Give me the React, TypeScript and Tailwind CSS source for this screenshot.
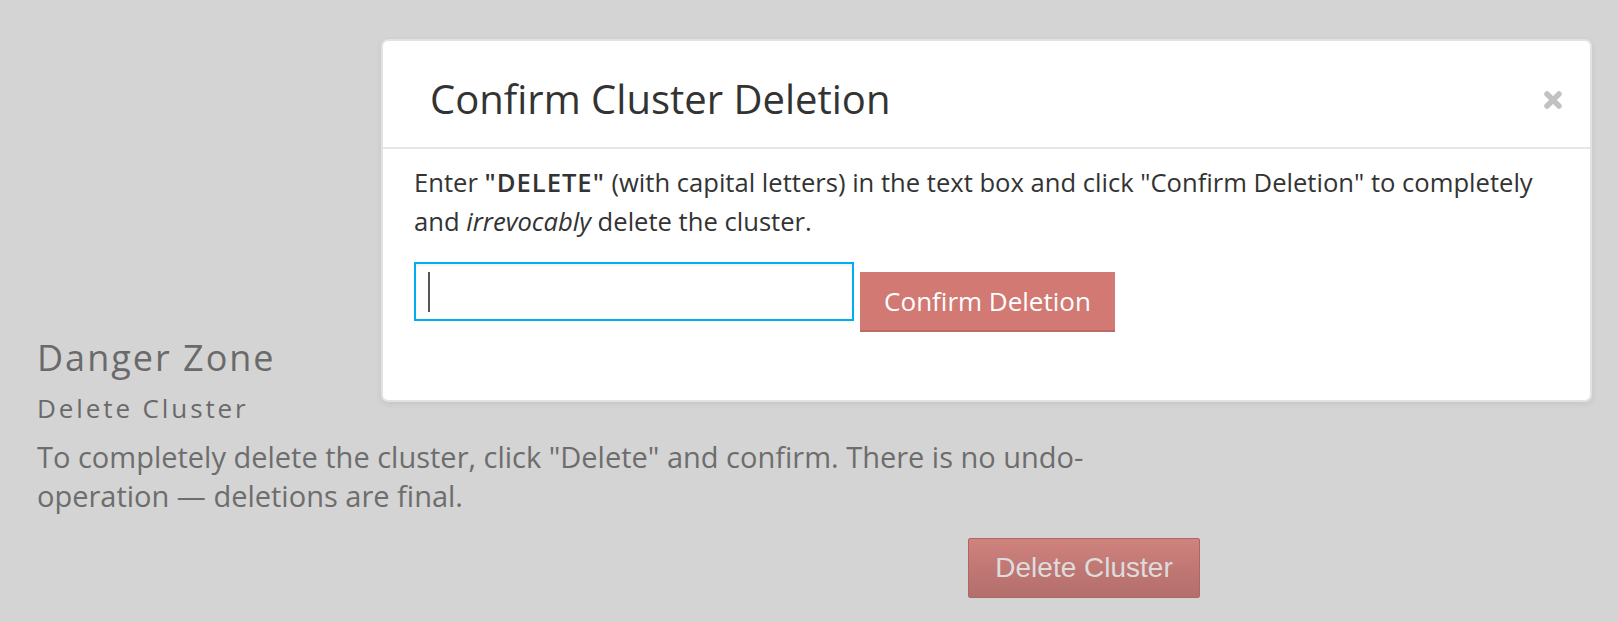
const closeIcon = (
  <svg width="20" height="20" viewBox="0 0 20 20" aria-hidden="true">
    <path d="M4 4 L16 16 M16 4 L4 16" stroke="#c2c2c2" strokeWidth="5.5" strokeLinecap="round" />
  </svg>
);

function ConfirmModal() {
  return (
    <div className="absolute left-[381px] top-[39px] w-[1211px] rounded-[7px] border-2 border-[#e2e2e2] bg-white shadow-[0_2px_6px_rgba(0,0,0,0.08)]">
      <div className="flex items-start justify-between border-b-2 border-[#e6e6e6] pl-[47px] pr-[27px] pt-[36px] pb-[26px]">
        <h3 className="text-[40px] leading-[44px] text-[#333]">Confirm Cluster Deletion</h3>
        <button className="mt-[13px]">{closeIcon}</button>
      </div>
      <div className="pl-[31px] pr-[31px] pt-[14px] pb-[68px]">
        <p className="text-[25.6px] leading-[39px] text-[#333]">
          Enter <strong className="font-semibold tracking-[1px]">"DELETE"</strong> (with capital letters) in the text box
          and click "Confirm Deletion" to completely and <em>irrevocably</em> delete the cluster.
        </p>
        <div className="mt-[21px] flex items-start gap-[6px]">
          <div className="flex h-[59px] w-[440px] items-center border-2 border-[#00aeef] pl-[12px] shadow-[inset_0_2px_2px_rgba(0,0,0,0.06)]">
            <span className="block h-[40px] w-[2px] bg-[#555]" />
          </div>
          <button className="mt-[10px] h-[60px] w-[255px] border-b-2 border-[#b96b67] bg-[#d27973] text-[26px] text-white">
            Confirm Deletion
          </button>
        </div>
      </div>
    </div>
  );
}

export default function App() {
  return (
    <div className="relative h-[622px] w-[1618px] overflow-hidden bg-[#d4d4d4] font-['Open_Sans',sans-serif]">
      <div className="w-[1200px] pl-[37px] pt-[338px]">
        <h2 className="text-[36px] leading-[40px] tracking-[2px] text-[#6a6a6a]">Danger Zone</h2>
        <h4 className="mt-[14px] text-[26px] leading-[32px] tracking-[2.9px] text-[#6a6a6a]">Delete Cluster</h4>
        <p className="mt-[13px] max-w-[1130px] text-[29px] leading-[39px] text-[#6d6d6d]">
          To completely delete the cluster, click "Delete" and confirm. There is no undo-operation — deletions are
          final.
        </p>
        <div className="mt-[23px] flex justify-end">
          <button className="h-[60px] w-[232px] rounded-[2px] border border-[#ad6865] bg-gradient-to-b from-[#cf827e] to-[#b36e6b] font-['Liberation_Sans',Arial,sans-serif] text-[28px] text-[#dcdcdc]">
            Delete Cluster
          </button>
        </div>
      </div>
      <ConfirmModal />
    </div>
  );
}
